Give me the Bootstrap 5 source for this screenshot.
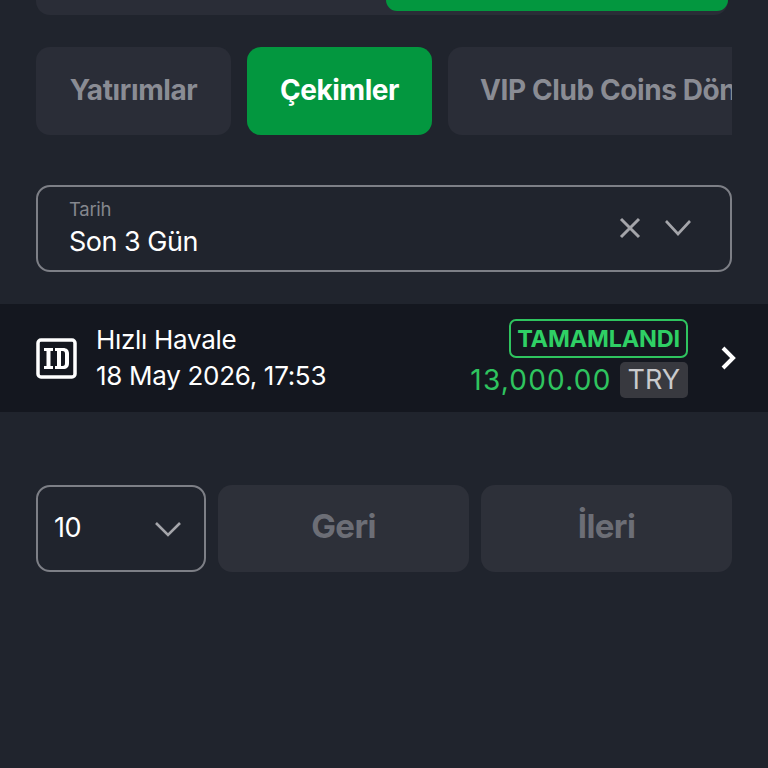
<!DOCTYPE html>
<html lang="tr">
<head>
    <meta charset="UTF-8" />
    <meta name="viewport" content="width=device-width, initial-scale=1" />
    <title>Çekimler</title>
    <link href="https://cdn.jsdelivr.net/npm/bootstrap@5.3.0/dist/css/bootstrap.min.css" rel="stylesheet" />
    <style>
    body {
        background-color: #20242d;
        font-family: Inter, "Noto Sans", sans-serif;
        height: 768px;
        overflow: hidden;
    }
    .page-pad { padding: 0 36px; }
    .top-switch { height: 15px; background: #2a2d37; border-radius: 0 0 14px 14px; width: 692px; }
    .top-active { width: 342px; height: 11px; background: #03973f; border-radius: 0 0 12px 12px; }
    .tab-strip { margin-top: 32px; gap: 16px; height: 88px; overflow: hidden; }
    .tab-btn {
        flex: none;
        height: 88px;
        border: 0;
        border-radius: 14px;
        background: #2a2d37;
        color: #8a8c94;
        font-size: 28px;
        font-weight: 700;
        letter-spacing: -0.4px;
        padding: 0 0 3px;
    }
    .tab-btn.is-active { background: #03973f; color: #fff; }
    .tab-first { width: 195px; }
    .tab-second { width: 185px; }
    .tab-third { width: 284px; padding-left: 32px; text-align: left; white-space: nowrap; overflow: hidden; border-radius: 14px 0 0 14px; }
    .date-filter {
        margin-top: 50px;
        height: 87px;
        border: 2px solid #7d7f86;
        border-radius: 14px;
        padding: 0 31px;
    }
    .date-label { color: #85878e; font-size: 18.5px; line-height: 22px; letter-spacing: -0.3px; }
    .date-value { color: #fff; font-size: 27px; line-height: 34px; margin-top: 5px; letter-spacing: -0.5px; }
    .filter-icons { gap: 21px; margin-right: 6px; margin-top: -1px; }
    .tx-row {
        margin-top: 32px;
        height: 108px;
        background: #14171f;
        padding: 0 31px 0 36px;
    }
    .tx-title { color: #fff; font-size: 26px; line-height: 36px; letter-spacing: -0.3px; }
    .tx-icon { margin-right: 19px; }
    .status-pill {
        border: 2px solid #2fc45f;
        border-radius: 7px;
        color: #2fd065;
        font-size: 23.5px;
        font-weight: 700;
        line-height: 35px;
        padding: 0 6px;
        letter-spacing: -0.2px;
    }
    .tx-amount { color: #2fc45f; font-size: 28px; letter-spacing: 1.2px; line-height: 36px; }
    .tx-currency {
        background: #38393f;
        color: #c9cacd;
        font-size: 27px;
        line-height: 36px;
        border-radius: 5px;
        padding: 0 8px;
        margin-left: 8px;
    }
    .tx-chevron { margin-left: 32px; }
    .pager { margin-top: 73px; gap: 12px; height: 87px; }
    .size-select {
        width: 170px;
        border: 2px solid #7d7f86;
        border-radius: 14px;
        padding: 0 22px 0 16px;
        color: #fff;
        font-size: 27px;
        letter-spacing: -0.5px;
    }
    .pager-btn {
        flex: 1;
        border: 0;
        border-radius: 14px;
        background: #2d3039;
        color: #6c6e76;
        font-size: 33px;
        font-weight: 700;
        letter-spacing: -0.6px;
        padding: 0 0 3px;
    }
    </style>
</head>
<body>
    <div class="page-pad">
        <div class="top-switch d-flex justify-content-end">
            <div class="top-active"></div>
        </div>

        <div class="tab-strip d-flex">
            <button class="tab-btn tab-first" type="button">Yatırımlar</button>
            <button class="tab-btn tab-second is-active" type="button">Çekimler</button>
            <button class="tab-btn tab-third" type="button">VIP Club Coins Dön</button>
        </div>

        <div class="date-filter d-flex align-items-center justify-content-between">
            <div>
                <div class="date-label">Tarih</div>
                <div class="date-value">Son 3 Gün</div>
            </div>
            <div class="filter-icons d-flex align-items-center">
                <svg width="24" height="24" viewBox="0 0 24 24" fill="none" stroke="#a4a5aa" stroke-width="3"><path d="M3 3l18 18M21 3L3 21" /></svg>
                <svg width="30" height="20" viewBox="0 0 30 20" fill="none" stroke="#a4a5aa" stroke-width="2.6"><path d="M3 3l12 13L27 3" /></svg>
            </div>
        </div>
    </div>

    <div class="tx-row d-flex align-items-center">
        <svg class="tx-icon" width="41" height="41" viewBox="0 0 41 41" fill="none">
            <rect x="2" y="2" width="37" height="37" rx="3" stroke="#fff" stroke-width="3.5" />
            <path d="M8 10h9v3h-2.5v15H17v3H8v-3h2.5V13H8z" fill="#fff" />
            <path fill-rule="evenodd" d="M19 10h8c4 0 6 2 6 6v9c0 4-2 6-6 6h-8v-3h2V13h-2zm6 3v15h1.5c2 0 2.5-1 2.5-3v-9c0-2-.5-3-2.500-3z" fill="#fff" />
        </svg>
        <div class="flex-grow-1">
            <div class="tx-title">Hızlı Havale</div>
            <div class="tx-title">18 May 2026, 17:53</div>
        </div>
        <div class="d-flex flex-column align-items-end">
            <div class="status-pill">TAMAMLANDI</div>
            <div class="d-flex align-items-center mt-1">
                <span class="tx-amount">13,000.00</span>
                <span class="tx-currency">TRY</span>
            </div>
        </div>
        <svg class="tx-chevron" width="17" height="26" viewBox="0 0 17 26" fill="none" stroke="#fff" stroke-width="4"><path d="M3 3l10 10L3 23" /></svg>
    </div>

    <div class="page-pad">
        <div class="pager d-flex">
            <div class="size-select d-flex align-items-center justify-content-between">
                <span>10</span>
                <svg width="28" height="18" viewBox="0 0 28 18" fill="none" stroke="#a4a5aa" stroke-width="2.6"><path d="M2 3l12 12L26 3" /></svg>
            </div>
            <button class="pager-btn" type="button">Geri</button>
            <button class="pager-btn" type="button">İleri</button>
        </div>
    </div>

    <script src="https://cdn.jsdelivr.net/npm/bootstrap@5.3.0/dist/js/bootstrap.bundle.min.js"></script>
</body>
</html>
